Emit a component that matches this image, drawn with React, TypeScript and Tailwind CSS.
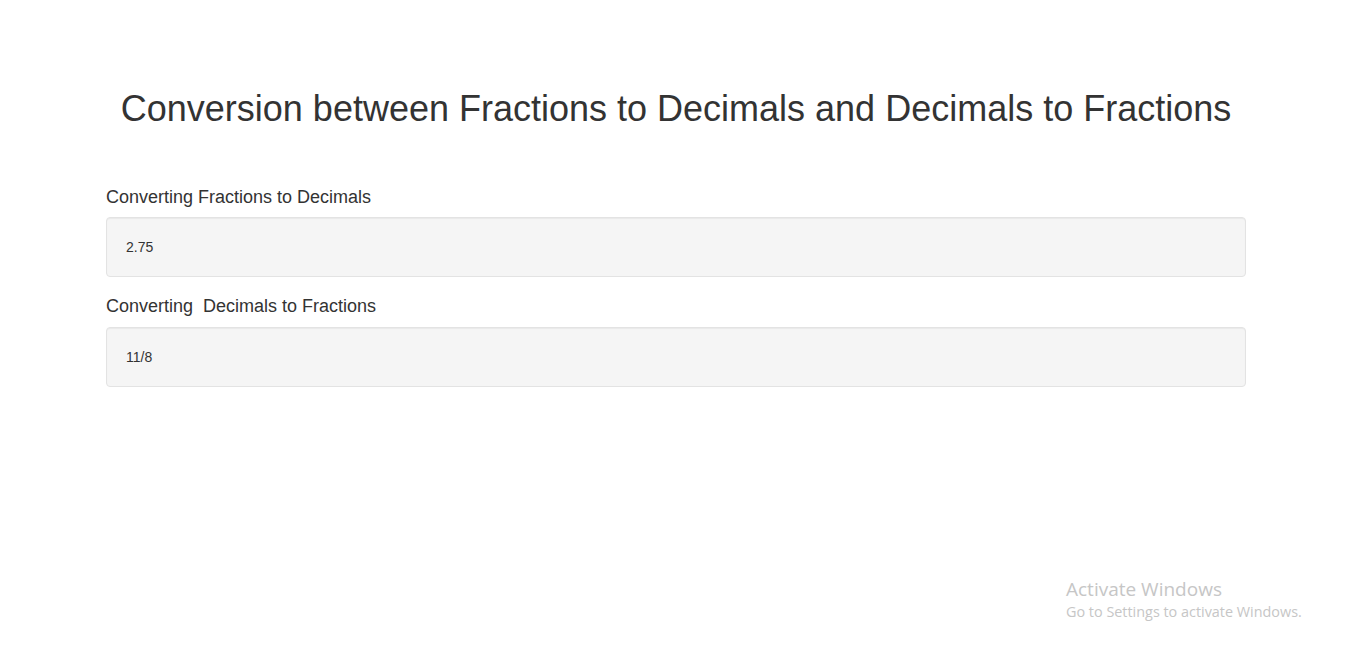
export default function App() {
  return (
    <div className="relative min-h-[651px] bg-white text-[#333333] font-['Liberation_Sans',Arial,sans-serif]">
      <div className="w-[1140px] ml-[106px] pt-[89px]">
        <h1 className="text-center text-[36px] leading-[1.1] font-normal mb-[59px]">
          Conversion between Fractions to Decimals and Decimals to Fractions
        </h1>

        <h4 className="text-[18px] leading-[1.1] mb-[10px]">Converting Fractions to Decimals</h4>
        <div className="min-h-[20px] p-[19px] mb-[20px] bg-[#f5f5f5] border border-[#e3e3e3] rounded-[4px] shadow-[inset_0_1px_1px_rgba(0,0,0,0.05)] text-[14px] leading-[20px]">
          2.75
        </div>

        <h4 className="text-[18px] leading-[1.1] mb-[10px] whitespace-pre">Converting  Decimals to Fractions</h4>
        <div className="min-h-[20px] p-[19px] bg-[#f5f5f5] border border-[#e3e3e3] rounded-[4px] shadow-[inset_0_1px_1px_rgba(0,0,0,0.05)] text-[14px] leading-[20px]">
          11/8
        </div>
      </div>

      {/* Windows watermark */}
      <div className="absolute left-[1066px] top-[577px] text-[#c6c6c6] font-['Open_Sans','Noto_Sans',sans-serif] pointer-events-none">
        <div className="text-[19px] leading-[25px]">Activate Windows</div>
        <div className="text-[14.4px] leading-[20px]">Go to Settings to activate Windows.</div>
      </div>
    </div>
  );
}
